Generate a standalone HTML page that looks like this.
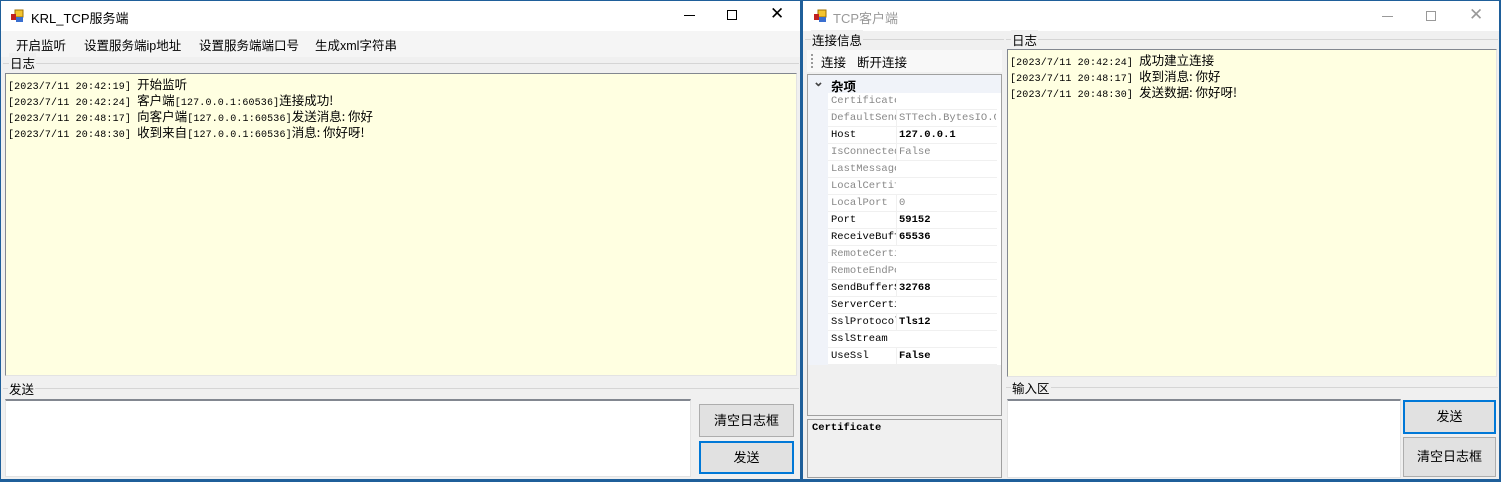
<!DOCTYPE html><html><head><meta charset="utf-8"><style>
*{margin:0;padding:0;box-sizing:border-box}
body{width:1501px;height:482px;position:relative;background:#1f5f9a;overflow:hidden;font-family:"Liberation Sans","Noto Sans CJK SC",sans-serif;font-size:12px;color:#000}
.a{position:absolute}
.win{background:#f0f0f0}
.title{background:#fff}
.mono{font-family:"Noto Sans CJK SC",sans-serif;font-size:12.5px;line-height:16px}
.mono div{height:16px;white-space:nowrap;overflow:visible}
.mono s{text-decoration:none;font-family:"Liberation Mono",monospace;font-size:10px;line-height:16px;letter-spacing:0.15px}
.btn{position:absolute;background:#e1e1e1;border:1px solid #adadad;text-align:center;font-size:13px}
.btn.f{border:2px solid #0078d7}
.ico{position:absolute;width:14px;height:14px}
.prow{position:absolute;left:828px;width:169px;height:17px;border-bottom:1px solid #f0f0f0;font-family:"Liberation Mono",monospace;font-size:10.5px;line-height:16px}
.prow span{position:absolute;left:3px;width:65px;overflow:hidden;white-space:nowrap}
.prow b{position:absolute;left:68px;width:100px;overflow:hidden;white-space:nowrap;border-left:1px solid #f0f0f0;padding-left:2px}
.g{color:#888}
</style></head><body>
<div class="a win" style="left:1px;top:1px;width:799px;height:478px"></div>
<div class="a title" style="left:1px;top:1px;width:799px;height:30px"></div>
<div class="ico" style="left:10px;top:9px"><svg width="14" height="14"><rect x="5" y="1" width="8" height="7" fill="#f4c430" stroke="#a07000"/><rect x="1" y="5" width="5" height="6" fill="#c02020"/><rect x="6" y="8" width="7" height="5" fill="#3a6fd0"/></svg></div>
<div class="a" style="left:31px;top:8px;font-size:13px">KRL_TCP服务端</div>
<div class="a" style="left:684px;top:15px;width:11px;height:1px;background:#000"></div>
<div class="a" style="left:727px;top:10px;width:10px;height:10px;border:1px solid #000"></div>
<div class="a" style="left:770px;top:4px;font-size:17px;font-weight:100">✕</div>
<div class="a" style="left:1px;top:31px;width:799px;height:26px;background:#f5f5f5"></div>
<div class="a" style="left:16px;top:35px;font-size:12.5px">开启监听</div>
<div class="a" style="left:84px;top:35px;font-size:12.5px">设置服务端ip地址</div>
<div class="a" style="left:199px;top:35px;font-size:12.5px">设置服务端端口号</div>
<div class="a" style="left:315px;top:35px;font-size:12.5px">生成xml字符串</div>
<div class="a" style="left:3px;top:63px;width:796px;height:1px;background:#d5d5d5"></div>
<div class="a" style="left:9px;top:53px;background:#f0f0f0;padding:0 1px;font-size:12.5px">日志</div>
<div class="a mono" style="left:5px;top:73px;width:792px;height:303px;background:#ffffe1;border:1px solid #828790;border-right-color:#e3e3e3;border-bottom-color:#e3e3e3;padding:2px 0 0 2px"><div><s>[2023/7/11 20:42:19] </s>开始监听</div><div><s>[2023/7/11 20:42:24] </s>客户端<s>[127.0.0.1:60536]</s>连接成功!</div><div><s>[2023/7/11 20:48:17] </s>向客户端<s>[127.0.0.1:60536]</s>发送消息: 你好</div><div><s>[2023/7/11 20:48:30] </s>收到来自<s>[127.0.0.1:60536]</s>消息: 你好呀!</div></div>
<div class="a" style="left:3px;top:388px;width:796px;height:1px;background:#d5d5d5"></div>
<div class="a" style="left:8px;top:379px;background:#f0f0f0;padding:0 1px;font-size:12.5px">发送</div>
<div class="a" style="left:5px;top:399px;width:686px;height:78px;background:#fff;border:1px solid #e3e3e3;border-top:2px solid #828790"></div>
<div class="btn" style="left:699px;top:404px;width:95px;height:33px;line-height:31px">清空日志框</div>
<div class="btn f" style="left:699px;top:441px;width:95px;height:33px;line-height:29px">发送</div>
<div class="a win" style="left:803px;top:1px;width:696px;height:478px"></div>
<div class="a title" style="left:803px;top:1px;width:696px;height:30px"></div>
<div class="ico" style="left:813px;top:9px"><svg width="14" height="14"><rect x="5" y="1" width="8" height="7" fill="#f4c430" stroke="#a07000"/><rect x="1" y="5" width="5" height="6" fill="#c02020"/><rect x="6" y="8" width="7" height="5" fill="#3a6fd0"/></svg></div>
<div class="a" style="left:833px;top:8px;font-size:13px;color:#999">TCP客户端</div>
<div class="a" style="left:1382px;top:16px;width:11px;height:1px;background:#999"></div>
<div class="a" style="left:1426px;top:11px;width:10px;height:10px;border:1px solid #999"></div>
<div class="a" style="left:1469px;top:5px;font-size:17px;color:#999">✕</div>
<div class="a" style="left:805px;top:39px;width:199px;height:1px;background:#d5d5d5"></div>
<div class="a" style="left:811px;top:30px;background:#f0f0f0;padding:0 1px;font-size:12.5px">连接信息</div>
<div class="a" style="left:807px;top:50px;width:195px;height:22px;background:#f8f8f8"></div>
<div class="a" style="left:811px;top:54px;width:2px;height:14px;border-left:2px dotted #999"></div>
<div class="a" style="left:821px;top:52px;font-size:12.5px">连接</div>
<div class="a" style="left:857px;top:52px;font-size:12.5px">断开连接</div>
<div class="a" style="left:807px;top:74px;width:195px;height:342px;background:#f0f0f0;border:1px solid #a0a0a0"></div>
<div class="a" style="left:808px;top:75px;width:193px;height:290px;background:#fff"></div>
<div class="a" style="left:808px;top:75px;width:20px;height:290px;background:#f0f3f9"></div>
<div class="a" style="left:808px;top:75px;width:193px;height:18px;background:#f0f3f9"></div>
<div class="a" style="left:813px;top:74px;font-size:13px;font-weight:bold;color:#444">⌄</div>
<div class="a" style="left:831px;top:76px;font-weight:bold;font-size:12.5px">杂项</div>
<div class="prow" style="top:93px"><span class="g">Certificate</span><b></b></div>
<div class="prow" style="top:110px"><span class="g">DefaultSender</span><b class="g" style="font-weight:normal">STTech.BytesIO.Core</b></div>
<div class="prow" style="top:127px"><span>Host</span><b>127.0.0.1</b></div>
<div class="prow" style="top:144px"><span class="g">IsConnected</span><b class="g" style="font-weight:normal">False</b></div>
<div class="prow" style="top:161px"><span class="g">LastMessage</span><b></b></div>
<div class="prow" style="top:178px"><span class="g">LocalCertificate</span><b></b></div>
<div class="prow" style="top:195px"><span class="g">LocalPort</span><b class="g" style="font-weight:normal">0</b></div>
<div class="prow" style="top:212px"><span>Port</span><b>59152</b></div>
<div class="prow" style="top:229px"><span>ReceiveBuffer</span><b>65536</b></div>
<div class="prow" style="top:246px"><span class="g">RemoteCertificate</span><b></b></div>
<div class="prow" style="top:263px"><span class="g">RemoteEndPoint</span><b></b></div>
<div class="prow" style="top:280px"><span>SendBufferSize</span><b>32768</b></div>
<div class="prow" style="top:297px"><span>ServerCertificate</span><b></b></div>
<div class="prow" style="top:314px"><span>SslProtocol</span><b>Tls12</b></div>
<div class="prow" style="top:331px"><span>SslStream</span><b></b></div>
<div class="prow" style="top:348px"><span>UseSsl</span><b>False</b></div>
<div class="a" style="left:807px;top:419px;width:195px;height:59px;background:#f0f0f0;border:1px solid #a0a0a0;padding:2px 4px;font-family:'Liberation Mono',monospace;font-weight:bold;font-size:10.5px">Certificate</div>
<div class="a" style="left:1006px;top:39px;width:492px;height:1px;background:#d5d5d5"></div>
<div class="a" style="left:1011px;top:30px;background:#f0f0f0;padding:0 1px;font-size:12.5px">日志</div>
<div class="a mono" style="left:1007px;top:49px;width:490px;height:328px;background:#ffffe1;border:1px solid #828790;border-right-color:#e3e3e3;border-bottom-color:#e3e3e3;padding:2px 0 0 2px"><div><s>[2023/7/11 20:42:24] </s>成功建立连接</div><div><s>[2023/7/11 20:48:17] </s>收到消息: 你好</div><div><s>[2023/7/11 20:48:30] </s>发送数据: 你好呀!</div></div>
<div class="a" style="left:1006px;top:387px;width:492px;height:1px;background:#d5d5d5"></div>
<div class="a" style="left:1011px;top:378px;background:#f0f0f0;padding:0 1px;font-size:12.5px">输入区</div>
<div class="a" style="left:1007px;top:399px;width:394px;height:79px;background:#fff;border:1px solid #e3e3e3;border-top:2px solid #828790"></div>
<div class="btn f" style="left:1403px;top:400px;width:93px;height:34px;line-height:30px">发送</div>
<div class="btn" style="left:1403px;top:437px;width:93px;height:40px;line-height:38px">清空日志框</div>
</body></html>
